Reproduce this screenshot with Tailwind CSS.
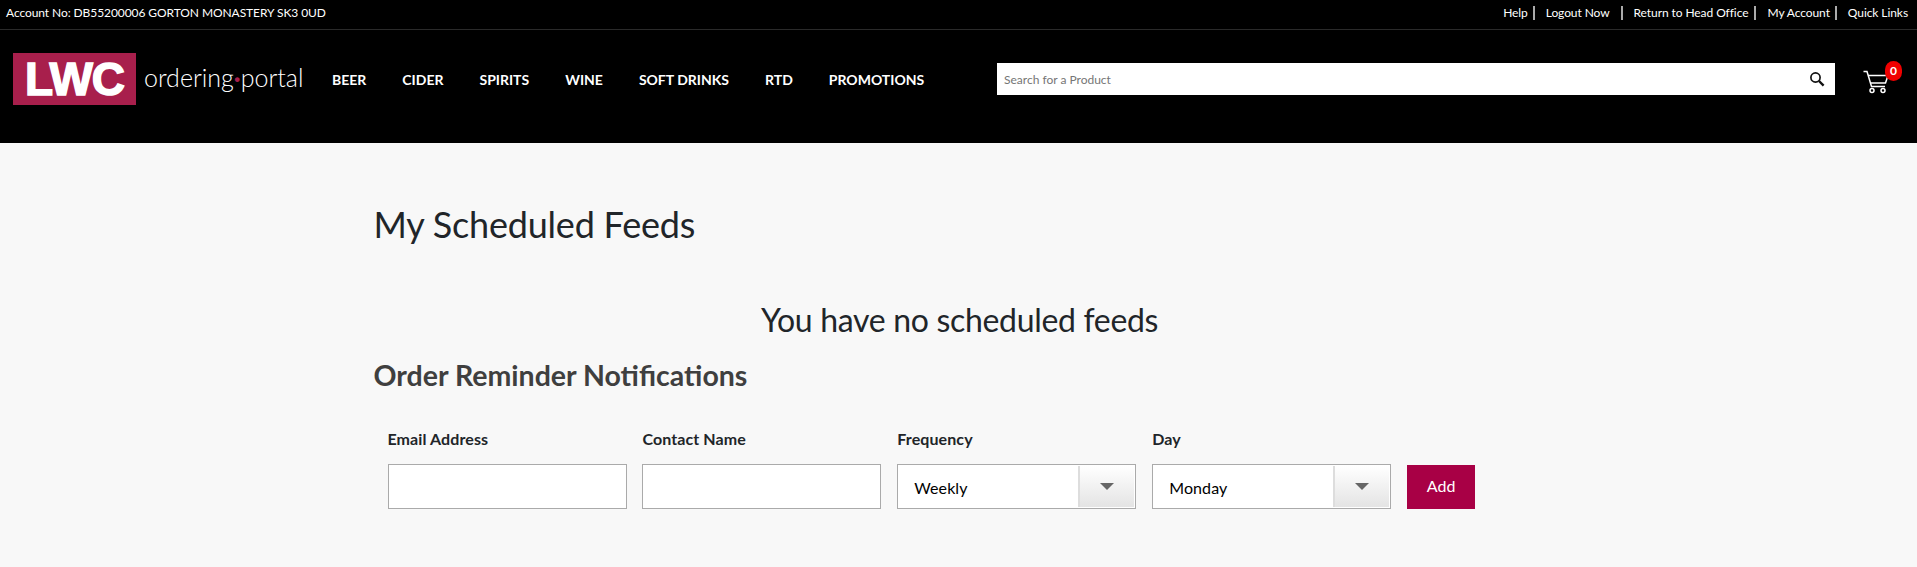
<!DOCTYPE html>
<html lang="en">
<head>
    <meta charset="UTF-8">
    <meta name="viewport" content="width=device-width, initial-scale=1.0">
    <title>My Scheduled Feeds</title>
    <script src="https://cdn.jsdelivr.net/npm/@tailwindcss/browser@4"></script>
</head>
<body class="bg-[#f8f8f8] font-['Lato',sans-serif] text-[#212529] overflow-hidden">
    <header class="bg-black text-white h-[143px]">
        <div class="h-[30px] border-b border-[#2a2a2a] flex justify-between items-center pl-[6px] pr-[9px] text-[12px] tracking-[-0.08px] pb-[4px]">
            <span>Account No: DB55200006 GORTON MONASTERY SK3 0UD</span>
            <div class="flex items-center">
                <a class="pr-[5px] border-r-2 border-[#aaa] leading-[14px]">Help</a>
                <a class="ml-[11px] pr-[11px] border-r-2 border-[#aaa] leading-[14px]">Logout Now</a>
                <a class="ml-[11px] pr-[6px] border-r-2 border-[#aaa] leading-[14px]">Return to Head Office</a>
                <a class="ml-[11px] pr-[5px] border-r-2 border-[#aaa] leading-[14px]">My Account</a>
                <a class="ml-[11px]">Quick Links</a>
            </div>
        </div>
        <div class="flex items-start pl-[13px]">
            <div class="mt-[23px] w-[123px] h-[52px] bg-[#a81f4c] flex items-center justify-center font-['Liberation_Sans'] font-bold text-[46px] text-white tracking-[-1px] [-webkit-text-stroke:1.5px_white]">LWC</div>
            <div class="mt-[32px] ml-[8px] w-[170px] text-[25px] leading-[30px] font-light text-white whitespace-nowrap">ordering<span class="text-[#a81f4c] font-bold">·</span>portal</div>
            <nav class="mt-[40px] flex gap-[36px] text-[14px] leading-[20px] font-bold ml-[18px]">
                <a>BEER</a>
                <a>CIDER</a>
                <a>SPIRITS</a>
                <a>WINE</a>
                <a>SOFT DRINKS</a>
                <a>RTD</a>
                <a>PROMOTIONS</a>
            </nav>
            <div class="absolute left-[997px] top-[63px] w-[838px] h-[32px] bg-white flex items-center justify-between pl-[7px] pr-[10px]">
                <span class="text-[12px] text-[#757575] pt-[1px]">Search for a Product</span>
                <svg width="16" height="16" viewBox="0 0 16 16" fill="none" stroke="#111" class="mb-[1px]">
                    <circle cx="6.5" cy="6.5" r="4.6" stroke-width="1.7"/>
                    <path d="M10 10l4.6 4.6" stroke-width="2.4"/>
                </svg>
            </div>
            <div class="absolute left-[1862px] top-[61px] w-[40px] h-[36px]">
                <svg width="28" height="26" viewBox="0 0 28 26" fill="none" stroke="white" stroke-width="1.5" class="absolute left-0 top-[8px]">
                    <path d="M1.5 2.5H5L9.5 17.5H23"/>
                    <path d="M6 6.5H26L23.5 14H8.5"/>
                    <circle cx="10" cy="21.5" r="2"/>
                    <circle cx="21" cy="21.5" r="2"/>
                </svg>
                <span class="absolute left-[23px] top-0 w-[17px] h-[20px] rounded-full bg-[#f00000] text-white text-[12px] font-bold leading-[20px] text-center">0</span>
            </div>
        </div>
    </header>

    <main class="w-[1200px] mx-auto px-[15px]">
        <h1 class="mt-[58px] text-[36px] leading-[46px] tracking-[-0.2px]">My Scheduled Feeds</h1>
        <p class="mt-[50px] pl-[2px] text-[32px] leading-[46px] text-center tracking-[-0.32px]">You have no scheduled feeds</p>
        <h2 class="mt-[14px] text-[28.5px] leading-[36px] font-bold text-[#3f3f3f]">Order Reminder Notifications</h2>
        <form class="mt-[34px] pl-[14px] flex items-end gap-[15.9px] text-[16px]">
            <label class="w-[239px] font-bold tracking-[0.1px]">
                <span class="block leading-[24px] mb-[13px]">Email Address</span>
                <input class="block w-full h-[45px] bg-white border border-[#aaa]">
            </label>
            <label class="w-[239px] font-bold tracking-[0.1px]">
                <span class="block leading-[24px] mb-[13px]">Contact Name</span>
                <input class="block w-full h-[45px] bg-white border border-[#aaa]">
            </label>
            <label class="w-[239px] font-bold tracking-[0.1px]">
                <span class="block leading-[24px] mb-[13px]">Frequency</span>
                <span class="flex h-[45px] bg-white border border-[#aaa] font-normal text-black">
                    <span class="flex-1 pl-[16px] leading-[46px]">Weekly</span>
                    <span class="w-[56px] mt-[1px] mr-[1px] mb-[1px] border-l-2 border-[#ddd] bg-gradient-to-b from-white to-[#e4e4e4] flex items-center justify-center">
                        <span class="w-0 h-0 border-x-[7px] border-x-transparent border-t-[7px] border-t-[#666]"></span>
                    </span>
                </span>
            </label>
            <label class="w-[239px] font-bold tracking-[0.1px]">
                <span class="block leading-[24px] mb-[13px]">Day</span>
                <span class="flex h-[45px] bg-white border border-[#aaa] font-normal text-black">
                    <span class="flex-1 pl-[16px] leading-[46px]">Monday</span>
                    <span class="w-[56px] mt-[1px] mr-[1px] mb-[1px] border-l-2 border-[#ddd] bg-gradient-to-b from-white to-[#e4e4e4] flex items-center justify-center">
                        <span class="w-0 h-0 border-x-[7px] border-x-transparent border-t-[7px] border-t-[#666]"></span>
                    </span>
                </span>
            </label>
            <button type="button" class="w-[68px] h-[44px] bg-[#a80045] text-white font-normal pb-[3px]">Add</button>
        </form>
    </main>
</body>
</html>
